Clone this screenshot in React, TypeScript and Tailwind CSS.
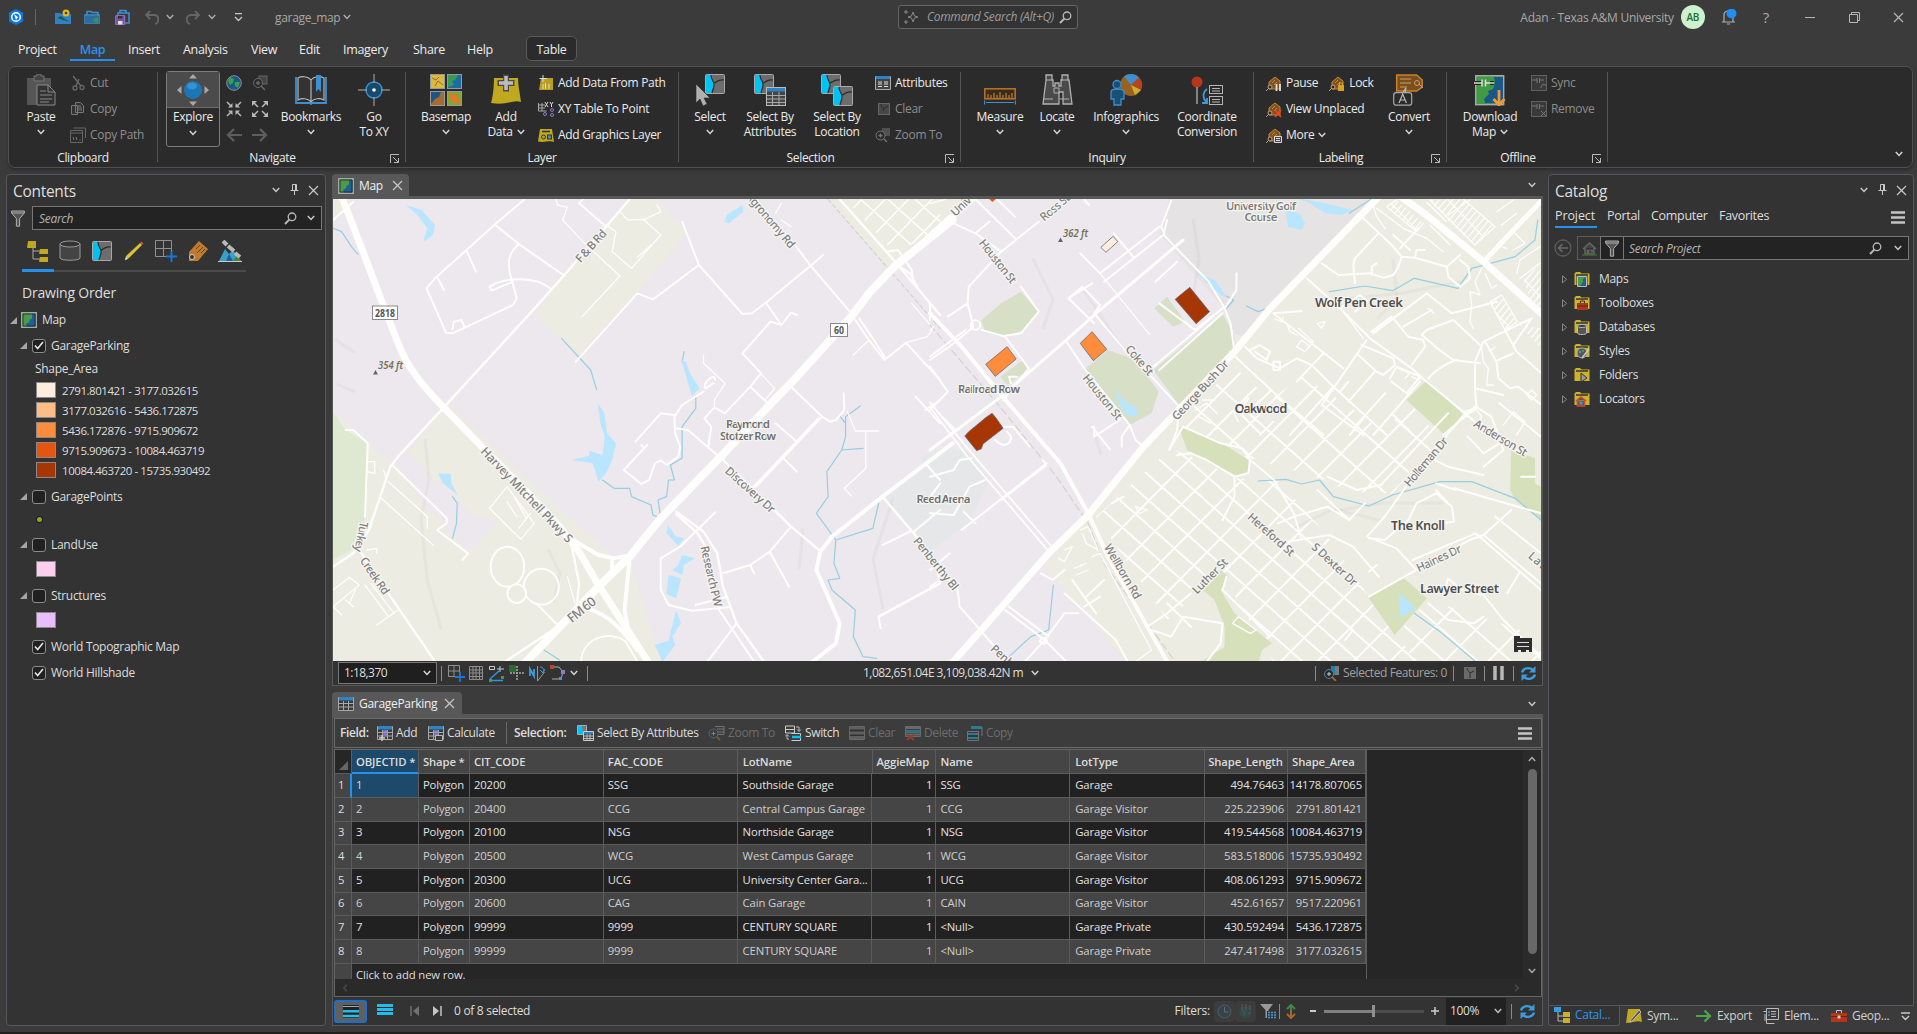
import React from "react";

/* ---------- small drawing helpers ---------- */
type IconProps = { w?: number; h?: number; vb?: string; className?: string; children?: React.ReactNode };
const I = ({ w = 16, h, vb, className = "", children }: IconProps) => (
  <svg width={w} height={h ?? w} viewBox={vb ?? `0 0 ${w} ${h ?? w}`} fill="none" className={"shrink-0 " + className}>
    {children}
  </svg>
);
const Chev = ({ c = "#d6d6d6", w = 8, className = "" }: { c?: string; w?: number; className?: string }) => (
  <I w={w} h={6} vb="0 0 8 6" className={className}><path d="M.8 1 4 4.4 7.2 1" stroke={c} strokeWidth="1.5" /></I>
);
const Close = ({ c = "#c8c8c8" }: { c?: string }) => <I w={11}><path d="M1 1l9 9M10 1 1 10" stroke={c} strokeWidth="1.2" /></I>;
const Pin = () => <I w={9} h={12}><path d="M2.5.5h4v6h-4zM.5 6.5h8M4.5 7v4M5.5 1v5" stroke="#c8c8c8" /></I>;
const Mag = ({ c = "#b9b9b9" }: { c?: string }) => <I w={13}><circle cx="8" cy="4.8" r="3.8" stroke={c} strokeWidth="1.3" /><path d="M5.3 7.6 1 12" stroke={c} strokeWidth="2" /></I>;
const Funnel = ({ w = 14 }: { w?: number }) => <I w={w} h={w + 3} vb="0 0 14 17"><path d="M.6 1h12.8v2L8.6 8.6v7.6H5.4V8.6L.6 3z" stroke="#b0b0b0" fill="#555" /><path d="M1 3h12" stroke="#b0b0b0" /></I>;
const Burger = () => <I w={14} h={13}><path d="M0 1.5h14M0 6.5h14M0 11.5h14" stroke="#c4c4c4" strokeWidth="2.6" /></I>;
const Refresh = () => (
  <I w={17}><path d="M2 7.5C3 3.5 9 1.500 13 5M15 9.500C14 13.500 8 15.500 4 12" stroke="#3c9bdc" strokeWidth="2.4" /><path d="M15.500 1v6.500H9zM1.500 16V9.500H8z" fill="#3c9bdc" /></I>
);
const Launcher = () => <I w={9} className="ml-[3px]"><path d="M.5 9V.5H9M3 3l5 5M8.500 4v4.500H4" stroke="#b9b9b9" /></I>;
const Sep = ({ className = "" }: { className?: string }) => <div className={"w-px shrink-0 bg-[#8a8a8a] " + className} />;

const MapMini = ({ w = 16 }: { w?: number }) => (
  <I w={w} vb="0 0 16 16"><path d="M.7.7h14.600v14.600H.7z" fill="#4c9a4c" stroke="#a8a8a8" strokeWidth="1.300" /><path d="M11 2h3.500v12.500H6l-1-3 3-1 1-3 2-1z" fill="#1d5f96" /><path d="M2 2h12v12H2z" stroke="#222" strokeWidth=".8" /></I>
);
const Table = ({ c = "#a8a8a8", head = "#2f83c5", dots = "", extra }: { c?: string; head?: string; dots?: string; extra?: React.ReactNode }) => (
  <I w={16}><path d="M.5 1.500h15v13H.5z" stroke={c} fill="#3a3a3a" /><path d="M1 1h14v3.500H1z" fill={head} /><path d="M1 7.500h14M1 11h14M5.500 5v9M10.500 5v9" stroke={c} />
    {dots && <path d="M6.200 6.300h4M6.200 9.300h4" stroke={dots} strokeWidth="2.200" />}{extra}</I>
);
const SelPoly = ({ x = 0, y = 0 }: { x?: number; y?: number }) => (
  <g transform={`translate(${x} ${y})`}><rect x=".5" y=".5" width="19" height="19" rx="1" fill="#6d6d6d" stroke="#a9a9a9" /><path d="M1 1h5c0 6 4 6 3 11l-2 7H1z" fill="#00c2f3" /><path d="M6 1c0 6 4 6 3 11l-2 7M9 9c3-1 4-4 10-3" stroke="#2b2b2b" strokeWidth="1.200" /></g>
);
const Tag = ({ extra }: { extra?: React.ReactNode }) => (
  <I w={17}><path d="M4 14V7l6-5 5 4v8z" fill="#7a5223" stroke="#d08532" /><path d="M7 8l3-3M9 10l3-3" stroke="#d08532" /><circle cx="5" cy="12" r="2" stroke="#c0a080" fill="#2b2b2b" /><path d="M1 16l3-3" stroke="#c0a080" />{extra}</I>
);
const Gray = ({ children }: { children: React.ReactNode }) => <I w={16}>{children}</I>;

/* ---------- ribbon ---------- */
const Big = ({ cls, icon, a, b, chev }: { cls: string; icon: React.ReactNode; a: string; b?: React.ReactNode; chev?: boolean }) => (
  <div className={"flex shrink-0 flex-col items-center whitespace-nowrap pt-[7px] " + cls}>
    <div className="mb-[3px] flex h-8 items-center">{icon}</div>
    <div className="h-[15px] leading-[15px]">{a}</div>
    <div className="flex h-[15px] items-center gap-1 leading-[15px]">{b}{chev && <Chev />}</div>
  </div>
);
const Small = ({ icon, t, dim, after }: { icon: React.ReactNode; t: string; dim?: boolean; after?: React.ReactNode }) => (
  <div className={"flex h-[26px] items-center gap-1 whitespace-nowrap " + (dim ? "text-[#8d8d8d]" : "")}>
    <div className="flex w-[17px] justify-center">{icon}</div><span>{t}</span>{after}
  </div>
);
const Group = ({ cls, label, launch, children }: { cls: string; label: string; launch?: boolean; children: React.ReactNode }) => (
  <>
    <div className={"flex shrink-0 flex-col " + cls}>
      <div className="flex h-[82px]">{children}</div>
      <div className={"grid h-[18px] items-center text-center leading-none " + (launch ? "grid-cols-[1fr_18px]" : "grid-cols-1")}>
        <span>{label}</span>{launch && <Launcher />}
      </div>
    </div>
    <div className="h-[90px] w-px shrink-0 self-center bg-[#555]" />
  </>
);

const Ribbon = () => (
  <div className="ml-2 mr-1 flex h-[102px] shrink-0 rounded-[7px] border border-[#505050] bg-[#2b2b2b] text-[#ececec] shadow-[0_2px_3px_rgba(0,0,0,.25)]">
    <Group cls="w-[148px]" label="Clipboard">
      <Big cls="ml-[9px] w-[46px]" a="Paste" chev icon={<I w={30} h={32}><rect x="1" y="4" width="24" height="27" fill="#555" /><path d="M8 2h3V0h4v2h3v5H8z" fill="#444" stroke="#777" /><path d="M11 11h11l7 7v13H11z" fill="#333" stroke="#8a8a8a" /><path d="M22 11v7h7M14 17h6M14 21h12M14 25h12M14 28h9" stroke="#8a8a8a" /></I>} />
      <div className="ml-[5px] flex flex-col pt-[3px]">
        <Small dim t="Cut" icon={<Gray><path d="M3 1l8 10M9 4 6 11" stroke="#666" strokeWidth="1.500" /><circle cx="12" cy="12.500" r="2" stroke="#666" strokeWidth="1.300" /><circle cx="5" cy="13" r="2" stroke="#666" strokeWidth="1.300" /></Gray>} />
        <Small dim t="Copy" icon={<Gray><path d="M1.500 4.500h6v9h-6zM5.500 1.500h5l3 3v7h-8z" stroke="#777" fill="#333" /><path d="M7 5h4M7 7h5M7 9h5" stroke="#777" /></Gray>} />
        <Small dim t="Copy Path" icon={<Gray><path d="M3.500 1h12v10M.5 3.500h12v12H.5zM.5 6h12" stroke="#666" /><path d="M3 10l1 3M6 10l1 3M9.500 13h1" stroke="#777" /></Gray>} />
      </div>
    </Group>
    <Group cls="w-[247px]" label="Navigate" launch>
      <div className="ml-2 mt-1 flex h-[76px] w-[54px] flex-col items-center rounded-[3px] border border-[#7d7d7d]">
        <div className="flex h-9 w-full items-center justify-center border-b border-[#6a6a6a] bg-[#4b4b4b]">
          <I w={32}><circle cx="16" cy="16" r="9" fill="#1b76b5" /><ellipse cx="15" cy="12" rx="5" ry="3.500" fill="#4aa3dc" opacity=".6" /><path d="M16 0l4 4.500h-8zM16 32l4-4.500h-8zM0 16l4.500-4v8zM32 16l-4.500-4v8z" fill="#a8a8a8" /></I>
        </div>
        <div className="mt-[2px] h-[14px] leading-[14px]">Explore</div><Chev className="mt-[6px]" />
      </div>
      <div className="ml-px mt-[3px] grid h-[78px] w-[52px] grid-cols-2 grid-rows-3 place-items-center">
        <I w={16}><circle cx="8" cy="8" r="7.300" fill="#165a86" stroke="#909090" /><path d="M4 2l4 2-1 4-3 2-2-4zM9 7l5 0-2 6-3-2z" fill="#3f9c4b" /></I>
        <I w={16}><rect x="7" y="1" width="8" height="8" fill="#444" stroke="#666" /><circle cx="6" cy="8" r="4.500" stroke="#6a6a6a" fill="#2b2b2b" /><path d="M4 8h4M6 6v4M9 11l4 4" stroke="#6a6a6a" strokeWidth="1.500" /></I>
        <I w={16}><path d="M1 1l4 4M15 1l-4 4M1 15l4-4M15 15l-4-4" stroke="#b8b8b8" strokeWidth="1.500" /><path d="M6.500 2v4.500H2zM9.500 2v4.500H14zM6.500 14V9.500H2zM9.500 14V9.500H14z" fill="#b8b8b8" /></I>
        <I w={16}><path d="M1 1l5 5M15 1l-5 5M1 15l5-5M15 15l-5-5" stroke="#b8b8b8" strokeWidth="1.500" /><path d="M0 0h5L0 5zM16 0v5l-5-5zM0 16v-5l5 5zM16 16h-5l5-5z" fill="#b8b8b8" /></I>
        <I w={16}><path d="M16 8H2M8 2 2 8l6 6" stroke="#5e5e5e" strokeWidth="2.200" /></I>
        <I w={16}><path d="M0 8h14M8 2l6 6-6 6" stroke="#5e5e5e" strokeWidth="2.200" /></I>
      </div>
      <Big cls="ml-[7px] w-[62px]" a="Bookmarks" chev icon={<I w={32} h={30}><path d="M2 3h-1v25h14l1 1 1-1h14V3h-1" stroke="#3d8fcf" strokeWidth="1.800" /><path d="M16 5C13 1 6 1 3 3v22c4-2 10-2 13 2 3-4 9-4 13-2V3c-4-2-10-2-13 2zM16 5v22" stroke="#b5b5b5" fill="#333" strokeWidth="1.200" /><path d="M21 0h5v17l-2.500-3-2.500 3z" fill="#3d8fcf" /></I>} />
      <Big cls="ml-[9px] w-[46px]" a="Go" b="To XY" icon={<I w={32}><circle cx="16" cy="16" r="8" fill="#164a6d" stroke="#3d8fcf" strokeWidth="1.400" /><path d="M16 0v9M16 23v9M0 16h9M23 16h9" stroke="#b0b0b0" /><circle cx="16" cy="16" r="1.800" fill="#fff" /></I>} />
    </Group>
    <Group cls="w-[272px]" label="Layer">
      <Big cls="ml-[10px] w-[60px]" a="Basemap" chev icon={<I w={32}>
        <rect x=".5" y=".5" width="14" height="14" fill="#d8b93d" stroke="#999" /><path d="M2 4l4 2 3-3M5 12l3-5 5 4" stroke="#a06a28" />
        <rect x="17.500" y=".5" width="14" height="14" fill="#1d6aa5" stroke="#999" /><path d="M18 1h10l-3 5-3 1 2 4-6 2z" fill="#3d9a55" />
        <rect x=".5" y="17.500" width="14" height="14" fill="#a56b2f" stroke="#999" /><path d="M1 18h10l-2 5-4 2-4 5z" fill="#1d5586" />
        <rect x="17.500" y="17.500" width="14" height="14" fill="#7fa63a" stroke="#999" /><path d="M20 18l3 3 4-1 1 5 3 2v2l-4-1-2 3-3-5-3-1z" fill="#e07a28" /></I>} />
      <Big cls="ml-[5px] w-[50px]" a="Add" b="Data" chev icon={<I w={32}><path d="M4 4h24c0 8 2 16 3 24-8-3-14 4-30 1C3 22 4 12 4 4z" fill="#c0a81f" /><path d="M16 .5v17M7.500 9h17" stroke="#4a4a4a" strokeWidth="6" /><path d="M16 2v14M9 9h14" stroke="#bdbdbd" strokeWidth="3.500" /></I>} />
      <div className="ml-[6px] flex flex-col pt-[3px]">
        <Small t="Add Data From Path" icon={<Gray><path d="M3 3h12v12H1z" fill="#b89f20" /><path d="M5 0v7M1.500 3.500H9M5 9v5M7.500 8v6M11 9v5" stroke="#ddd" /></Gray>} />
        <Small t="XY Table To Point" icon={<Gray><path d="M.5 2v8h8M1 4h6M1 7h6M4 2v8" stroke="#aaa" /><path d="M7 1l3 5M10 1 7 6M12 1l1.500 2.500L15 1M13.500 3v3" stroke="#ddd" /><circle cx="14" cy="9" r="1.500" stroke="#8c7bd0" /><circle cx="7" cy="13" r="1.500" stroke="#8c7bd0" /><circle cx="14" cy="14" r="1.500" stroke="#8c7bd0" /></Gray>} />
        <Small t="Add Graphics Layer" icon={<Gray><path d="M2 2h12l2 13c-5-2-9 1-16-.5z" fill="#c0a81f" /><path d="M4 4.500h8" stroke="#333" strokeWidth="1.500" /><circle cx="5.500" cy="10" r="2" stroke="#333" /><rect x="9.500" y="8" width="4" height="4" stroke="#333" fill="#4589b8" /></Gray>} />
      </div>
    </Group>
    <Group cls="w-[281px]" label="Selection" launch>
      <Big cls="ml-[6px] w-[50px]" a="Select" chev icon={<I w={32}><SelPoly x={11} y={0} /><path d="M2 10v19l4-4 3 7 4-2-3-6h6z" fill="#b0b0b0" stroke="#2b2b2b" strokeWidth=".6" /></I>} />
      <Big cls="w-[70px]" a="Select By" b="Attributes" icon={<I w={32}><SelPoly /><rect x="12.500" y="13.500" width="19" height="18" fill="#444" stroke="#bbb" /><path d="M13 14h18v3.500H13z" fill="#2f83c5" /><path d="M13 21.500h18M13 25h18M13 28.500h18M18.500 18v13M25 18v13" stroke="#a8a8a8" /></I>} />
      <Big cls="w-[64px]" a="Select By" b="Location" icon={<I w={32}><SelPoly /><SelPoly x={12} y={12} /></I>} />
      <div className="ml-[5px] flex flex-col pt-[3px]">
        <Small t="Attributes" icon={<Gray><path d="M.5 1.500h15v13H.5z" stroke="#aaa" fill="#444" /><path d="M1 1h14v3H1z" fill="#2f83c5" /><path d="M3 7h4M3 9h4M3 11.500h4M9 7h4M9 9h4M9 11.500h4" stroke="#ddd" /></Gray>} />
        <Small dim t="Clear" icon={<Gray><rect x="3.500" y="2.500" width="11" height="11" fill="#484848" stroke="#666" /><path d="M6 3c0 4 3 4 2.500 7M8 8l5-3" stroke="#2b2b2b" /></Gray>} />
        <Small dim t="Zoom To" icon={<Gray><rect x="7" y="1" width="8" height="8" fill="#505050" /><circle cx="5.500" cy="8.500" r="4.500" stroke="#777" fill="#2b2b2b" /><path d="M3.500 8.500h4M5.500 6.500v4M9 12l3 3" stroke="#777" strokeWidth="1.300" /></Gray>} />
      </div>
    </Group>
    <Group cls="w-[292px]" label="Inquiry">
      <Big cls="ml-[9px] w-[60px]" a="Measure" chev icon={<I w={32}><rect x=".8" y="14.800" width="30.400" height="10" fill="#3a2d1c" stroke="#b8732a" strokeWidth="1.500" /><path d="M4 24v-4M7 24v-3M10 24v-5M13 24v-3M16 24v-6M19 24v-3M22 24v-5M25 24v-3M28 24v-5" stroke="#d98c35" /><path d="M.5 26.500v4M31.500 26.500v4M2 28.500h28" stroke="#3d8fcf" strokeWidth="1.200" /></I>} />
      <Big cls="ml-px w-[52px]" a="Locate" chev icon={<I w={32}><path d="M5 1h6v5h1v6h2v-3h4v3h2V6h1V1h6v5h1l3 24h-9V18h-4v12H2L5 6z" fill="#4a4a4a" stroke="#b0b0b0" strokeWidth="1.300" /><path d="M5 6h7M20 6h7M3 25h9M19 25h9M13 14h5v5h-5z" stroke="#b0b0b0" /></I>} />
      <Big cls="ml-[3px] w-[80px]" a="Infographics" chev icon={<I w={34} h={32}><circle cx="22" cy="11" r="11" fill="#99621f" /><path d="M22 11 15 2.500A11 11 0 0 1 30 3.500z" fill="#3d8fcf" /><path d="M22 11l8-7.500A11 11 0 0 1 32 16z" fill="#b8421f" /><path d="M22 11l10 5-6 5z" fill="#c9b22b" /><circle cx="8" cy="10.500" r="4" fill="#1a4f74" stroke="#3d8fcf" strokeWidth="1.300" /><path d="M2 18c0-2 2-3 6-3s7 1 7 3v7h-3v6H5v-6H2z" fill="#1a4f74" stroke="#3d8fcf" strokeWidth="1.300" /></I>} />
      <Big cls="ml-[4px] w-[74px]" a="Coordinate" b="Conversion" icon={<I w={34} h={32}><circle cx="7" cy="8" r="5.500" fill="#b8371c" /><path d="M7 13v17" stroke="#aaa" strokeWidth="1.400" /><path d="M17 15c-4 3-5 8-1 13M17 24v5h-5" stroke="#3d9be0" strokeWidth="1.800" /><rect x="19.500" y="11.500" width="13" height="8" stroke="#b5b5b5" /><rect x="19.500" y="22.500" width="13" height="8" stroke="#b5b5b5" /><path d="M22 14.500h8M22 17h8M22 25.500h8M22 28h8" stroke="#b5b5b5" /></I>} />
    </Group>
    <Group cls="w-[192px]" label="Labeling" launch>
      <div className="ml-[11px] flex w-[100px] flex-col pt-[3px]">
        <div className="flex gap-[10px]">
          <Small t="Pause" icon={<Tag extra={<path d="M11.500 9v7M15 9v7" stroke="#ddd" strokeWidth="1.800" />} />} />
          <Small t="Lock" icon={<Tag extra={<><rect x="10" y="10" width="6" height="6" fill="#d8a22a" /><path d="M11.500 10V8h3v2" stroke="#d8a22a" /></>} />} />
        </div>
        <Small t="View Unplaced" icon={<Tag extra={<path d="M10 9l6 7M16 9l-6 7" stroke="#f0431c" strokeWidth="1.800" />} />} />
        <Small t="More" after={<Chev />} icon={<Tag extra={<path d="M9.500 9.500h7v6h-7zM11 11.500h4M11 13.500h4" stroke="#ddd" fill="#444" />} />} />
      </div>
      <Big cls="ml-[17px] w-[54px]" a="Convert" chev icon={<I w={32}><path d="M3.700 1h20l5.500 5v7l-5.500 4H3.700z" fill="#7a4f1c" stroke="#c8832e" strokeWidth="1.500" /><path d="M7 5h11M7 9h11M7 13h7" stroke="#c8a070" /><circle cx="24" cy="9" r="2.500" stroke="#c8a070" /><path d="M26 10l4 4" stroke="#aaa" /><rect x=".7" y="18.700" width="18" height="12.500" rx="2.500" fill="#2b2b2b" stroke="#a8a8a8" strokeWidth="1.200" /><path d="M6 29l3.700-9 3.700 9M7.500 26h4.500M10 18l3-4-1 5" stroke="#bbb" strokeWidth="1.200" /></I>} />
    </Group>
    <Group cls="w-[160px]" label="Offline" launch>
      <Big cls="ml-[12px] w-[62px]" a="Download" b="Map" chev icon={<I w={32}><rect x="1.700" y="1.700" width="28" height="29" fill="#439a45" stroke="#a9a9a9" strokeWidth="1.400" /><path d="M20 3h9v26H11l-1-4 5-5-1-3 5-2 2-6z" fill="#1a5688" /><path d="M1 9h7M16 9h4" stroke="#222" strokeWidth="4" /><path d="M0 9h8M8 5.500v7M11.500 5.500v7M12 9h8" stroke="#ddd" strokeWidth="1.500" /><path d="M25 16v14M19.500 25l5.500 6 5.500-6" stroke="#f09a36" strokeWidth="2.800" /></I>} />
      <div className="ml-[9px] flex flex-col pt-[3px]">
        <Small dim t="Sync" icon={<Gray><rect x=".5" y=".5" width="15" height="15" fill="#3a3a3a" stroke="#606060" /><path d="M1 5h5M6 3v5M8.500 3v5M9 5h4M10 13c0-4 4-5 5-2" stroke="#777" /></Gray>} />
        <Small dim t="Remove" icon={<Gray><rect x=".5" y=".5" width="15" height="15" fill="#3a3a3a" stroke="#606060" /><path d="M1 5h5M6 3v5M8.500 3v5M9 5h4M10 10l5 5M15 10l-5 5" stroke="#777" /></Gray>} />
      </div>
    </Group>
    <div className="ml-auto mr-[9px] mt-[84px]"><Chev /></div>
  </div>
);

/* ---------- map canvas ---------- */
const V = ({ d, w = 2, c = "#fefefc", f = "none", dash }: { d: string; w?: number; c?: string; f?: string; dash?: string }) => (
  <path d={d} stroke={c} strokeWidth={w} fill={f} strokeDasharray={dash} vectorEffect="non-scaling-stroke" strokeLinejoin="round" strokeLinecap="round" />
);
const F = ({ p, c }: { p: string; c: string }) => <polygon points={p} fill={c} />;
type LabelT = [string, number, number, number, number, number?];
const RoadLabels = ({ items, ox, sx }: { items: LabelT[]; ox: number; sx: number }) => (
  <>
    {items.map(([t, x1, y1, x2, y2, size = 11.5], i) => {
      const ax = ox + x1 / sx, ay = y1 / 3 - 29, bx = ox + x2 / sx, by = y2 / 3 - 29;
      const len = Math.hypot(bx - ax, by - ay);
      const a = (Math.atan2(by - ay, bx - ax) * 180) / Math.PI;
      return (
        <text key={i} transform={`translate(${ax} ${ay}) rotate(${a})`} y="4" textLength={len} fontSize={size} fill="#7f7f7f" fontWeight="500" stroke="#f6f5f2" strokeWidth="2.500" paintOrder="stroke">{t}</text>
      );
    })}
  </>
);
const gridLines = (x0: number, x1: number, stepA: number, stepB: number, off = 0) => {
  let d = "";
  for (let x = x0 - 1700; x < x1 + 200; x += stepA) d += `M${x + off} 0L${x + off + 1430} 1500`;
  for (let x = x0; x < x1 + 1700; x += stepB) d += `M${x} 0L${x - 1250} 1500`;
  return d;
};
const leftLabels: LabelT[] = [
  ["Harvey Mitchell Pkwy S", 393, 838, 618, 1112, 12], ["F & B Rd", 636, 272, 705, 184], ["Agronomy Rd", 1075, 72, 1190, 230], ["Discovery Dr", 1020, 897, 1140, 1022],
  ["Turkey", 88, 1056, 72, 1145], ["Creek Rd", 84, 1165, 146, 1270], ["FM 60", 615, 1350, 680, 1290, 13], ["Research PW", 962, 1128, 998, 1310],
];
const rightLabels: LabelT[] = [
  ["Univ", 57, 132, 100, 84], ["Ross St", 282, 146, 350, 78], ["Houston St", 130, 212, 213, 336], ["Coke St", 500, 530, 560, 612], ["Houston St", 392, 617, 480, 745],
  ["George Bush Dr", 617, 745, 750, 575], ["Anderson St", 1378, 758, 1508, 850], ["Holleman Dr", 1205, 945, 1304, 806], ["Hereford St", 808, 1035, 918, 1152],
  ["S Dexter Dr", 970, 1125, 1076, 1242], ["Haines Dr", 1232, 1196, 1342, 1134], ["Luther St", 668, 1266, 748, 1170], ["Wellborn Rd", 448, 1125, 527, 1284],
  ["Penberthy Bl", -36, 1106, 66, 1256], ["Penberthy", 158, 1430, 260, 1540], ["Lawyer", 1518, 1152, 1600, 1240],
];
const Place = ({ x, y, s = 14, c = "#4f4f4f", w, children }: { x: number; y: number; s?: number; c?: string; w?: number; children: string }) => (
  <text x={x} y={y} fontSize={s} fill={c} fontWeight={600} textAnchor="middle" textLength={w} stroke="#f4f3ef" strokeWidth="2.500" paintOrder="stroke">{children}</text>
);
const MapCanvas = () => (
  <svg width="1208" height="462" viewBox="0 0 1208 462" fill="none" className="block tracking-normal" fontFamily="'Noto Sans', sans-serif">
    <defs>
      <clipPath id="gA"><polygon points="420,1040 610,835 700,880 770,925 880,930 1000,1090 1110,1280 1175,1395 1240,1480 870,1480 735,1205 600,1350" /></clipPath>
      <clipPath id="gB"><polygon points="640,740 770,590 860,690 940,620 1050,700 1150,790 1210,690 1290,810 1170,970 1060,965 1000,930 800,860 640,770" /></clipPath>
      <clipPath id="gC"><polygon points="600,15 700,12 795,95 735,150 650,75" /><polygon points="500,14 540,50 580,85 560,110 470,35" /><polygon points="780,320 815,300 862,380 825,405" /><polygon points="880,250 932,210 932,345 905,330" /><polygon points="870,390 932,400 932,460" /></clipPath>
      <clipPath id="gD"><polygon points="1180,1395 1260,1290 1545,1400 1545,1480 1230,1480" /></clipPath>
      <clipPath id="gE"><polygon points="1325,88 1568,88 1568,180 1450,250" /></clipPath>
    </defs>
    <rect width="1208" height="462" fill="#ecece3" />
    <g transform="translate(-3 -29) scale(.38911 .33333)">
      <F c="#ece8ed" p="8,88 1280,88 1430,290 1640,130 1640,1480 850,1480 770,1165 725,1160 300,700 200,850 375,1040 435,1050 355,1150 250,1010 150,870 8,720" />
      <F c="#ecece3" p="770,88 840,88 915,190 790,370 635,555 525,435 600,315" />
      <F c="#ecece3" p="8,88 70,88 8,160" />
      <F c="#dfe9d2" p="8,725 40,780 95,820 88,1080 55,1140 8,1170" />
      <F c="#e5e7e9" p="1640,840 1568,850 1500,900 1420,985 1500,1085 1640,1180" />
    </g>
    <g transform="translate(597 -29) scale(.39541 .33333)">
      <F c="#ece8ed" p="0,200 110,88 620,88 780,500 400,1040 290,1190 500,1480 0,1480" />
      <F c="#e5e3e3" p="605,88 1130,88 860,410 790,500 770,490 740,410 580,190" />
      <F c="#e5e7e9" p="-20,860 40,830 100,850 150,930 100,1055 -20,1160" />
      <g clipPath="url(#gA)"><V w={2} d={gridLines(0, 1600, 72, 92, 12)} /></g>
      <g clipPath="url(#gB)"><V w={2} d={gridLines(0, 1600, 118, 76, 40)} /></g>
      <g clipPath="url(#gD)"><V w={2} d={gridLines(0, 1600, 84, 110)} /></g>
      <F c="#d7dfc6" p="230,365 275,425 240,480 190,498 140,488 130,450 180,400" />
      <F c="#d7dfc6" p="235,570 248,600 195,645 178,620" />
      <F c="#d7dfc6" p="600,380 645,455 615,470 567,415" />
      <F c="#d7dfc6" p="740,430 770,500 765,560 630,705 565,600" />
      <F c="#d7dfc6" p="450,540 520,570 578,665 560,730 505,765 390,600" />
      <F c="#d6e1bc" p="1255,632 1350,735 1305,798 1205,690" />
      <F c="#d6e1bc" p="630,770 740,820 805,870 805,905 775,917 700,870 650,840" />
      <F c="#d6e1bc" p="1470,838 1530,865 1530,940 1545,950 1545,1050 1480,990 1467,960" />
      <F c="#d6e1bc" p="1195,1222 1257,1285 1175,1395 1107,1280" />
      <F c="#d6e1bc" p="735,1200 755,1220 735,1260 770,1330 865,1420 840,1440 830,1480 680,1480 745,1430 745,1370 720,1290 690,1260" />
    </g>
    {/* soft relief */}
    <g stroke="#8a8f7c" strokeOpacity=".07" strokeWidth="3" fill="none">
      <path d="M92 240l4 40-8 40 6 60 14 50M2 140l20 14M4 185l18 8M215 350l12 24-6 30M560 300l-20 60 10 50M860 20l6 40-8 50M1060 60l4 40-20 20M760 230l8 26M960 330l40-20 50 12" />
      <path d="M1010 100l60-6 60-12M1000 312l50-8 60 0M470 330l-4 40M700 60l20 40-10 30M750 90l40 60" />
    </g>
    {/* streams and ponds */}
    <g transform="translate(-3 -29) scale(.38911 .33333)">
      <V c="#95cfe0" w={1.2} d="M8 175L30 185 55 230 72 253M595 505L670 600 685 658M700 930L730 955H770L775 980 825 1005 830 1035 850 1045 843 990 865 980 870 930H885L875 885 905 865V770L940 715V680M910 545L905 575M315 980L327 1000 325 1060 315 1105M1363 708L1325 740V800L1315 840 1277 905 1280 980 1250 1030 1300 1110 1395 1075 1410 1000M1310 738L1325 760M1315 840L1370 835M1300 1110L1295 1180 1310 1225 1280 1230 1290 1260 1350 1320 1345 1400 1370 1460 1405 1465M550 1440L590 1470" />
      {["195,105 235,120 270,165 265,195 240,215 250,175 225,135", "1060,105 1062,125 1025,160 1014,155 1020,135", "903,570 915,575 925,610 950,655 930,678", "688,700 705,730 712,790 735,820 725,870 712,905 690,935 675,880 620,870 665,858 668,842 700,855 706,800 695,760", "278,910 310,912 312,940 328,975 290,940", "868,1065 890,1100 910,1105 895,1127 865,1090", "905,1155 937,1165 910,1185 905,1215 880,1200 895,1185", "870,1215 902,1225 890,1285 865,1272", "890,1320 902,1360 880,1400 887,1425 855,1475 835,1425 870,1412"].map((p) => <F key={p} p={p} c="#b9e6fe" />)}
    </g>
    <g transform="translate(597 -29) scale(.39541 .33333)">
      <V c="#95cfe0" w={1.2} d="M1115 88L1060 130M750 415L768 390 750 378M800 408L830 425 860 412M1010 365L1100 348 1170 362 1225 325 1335 355 1370 295 1480 260 1530 210 1537 150M830 933L900 928 940 942 985 930 1020 980 1110 1008 1170 975 1290 935 1370 935 1480 985 1545 1050M312 1245L300 1380 255 1400 200 1460M1225 1330L1290 1385 1380 1475" />
      {["930,85 1000,100 1040,112 1070,120 1040,135 1000,130 960,100", "900,120 935,130 948,160 940,180 905,170", "675,310 720,330 752,383 735,375", "468,660 490,690 528,720 520,740 495,735 475,690", "1185,1268 1230,1315 1190,1342"].map((p) => <F key={p} p={p} c="#b9e6fe" />)}
    </g>
    {/* local streets, west */}
    <g transform="translate(-3 -29) scale(.38911 .33333)">
      <V c="#d3d3ce" w={1.2} dash="4 3" d="M1280 88L1568 475" />
      <g clipPath="url(#gE)"><V w={1.5} d={gridLines(600, 1400, 70, 60)} /></g>
      <V w={1.3} d="M580 88L585 105 610 112 598 150 650 215 745 318 648 440M745 125L765 150 805 148 850 195 775 295 725 245 735 185 710 165M840 105L850 125 805 150M790 262L825 225M1108 612L1143 655 1118 690M960 557L960 580 1015 640 988 690V712M1330 725L1350 783H1410M1377 783V895L1322 955 1340 978M1480 518L1535 500 1550 475 1495 400M1385 510L1345 555M410 1015L455 950 525 1060 490 1108 410 1015M455 995L480 1040M475 985L505 1045M485 1075L515 1030M150 935L250 1040V1075M132 985L265 1125M95 875H115V910L95 905M145 930L138 900M8 1260L50 1222 75 1245 8 1310 30 1335M90 1245L150 1340 175 1320M105 1240L165 1330M120 1365L175 1320M40 1290L60 1310M65 1260L50 1300M95 1140L120 1135V1150M610 1220L630 1300M1145 130L1160 100M1160 150L1185 170" />
      <V w={2} d="M8 150L60 95M425 162L500 88M425 162L270 325 248 355 298 488 315 490 470 405 480 385 462 310C455 260 465 245 485 222L425 165M485 222L600 315M350 240L375 305M275 320L293 360M410 350L415 362 470 335M410 350C450 320 530 320 565 355M315 478L318 455 338 450 345 470M640 100L710 170 690 200M640 100L650 88M905 155L948 285 1060 432 1085 430 1120 398 1235 287 1267 255M948 285L830 388 790 370 632 575M1195 225L1235 287 1340 430M1120 398L1160 465 1132 455 1060 550 1108 610 1080 650 1130 705M1160 465L1185 428 1200 435M1080 650L1015 730 988 712 962 745 980 770 972 830M990 630C990 605 955 640 965 655L985 640M960 665L905 705 885 740 887 790 900 830 895 860 865 885 850 870 835 880 820 930 800 942 755 900 815 825M800 825L808 835M885 735L850 730 785 815M890 775L920 780 970 830 1010 870M1265 740L1095 950M1255 745L1085 955M1145 760L1200 815M1165 865L1200 905M1185 650L1265 740 1285 755 1300 750 1322 720 1320 670M1185 1070L1130 1145 1080 1185 1010 1210M1130 1145L1180 1250M1080 1185L1090 1210M1350 450L1385 510 1425 570 1480 518 1568 630M1360 445L1395 505 1425 560M1505 680L1568 760M1530 720L1568 690M1410 1340L1415 1375M1500 1085L1568 1020M1420 1125L1490 1085M1530 880L1568 930M1530 1000L1568 940M990 1027L900 1130 850 1165V1260L870 1305 930 1322 1025 1312M940 1305L1020 1280M1045 1360L970 1475M1000 1320L1090 1475M160 885L300 1045 300 1060 275 1080 355 1150 340 1170M40 780H60L97 820 90 1040M645 1475C650 1400 720 1380 760 1415L790 1475M530 1300L585 1365M1430 245L1460 240 1495 300 1500 340M1465 290L1490 310 1510 350" />
      <g stroke="#fefefc" strokeWidth="2"><ellipse cx="456" cy="1190" rx="43" ry="60" vectorEffect="non-scaling-stroke" /><ellipse cx="543" cy="1250" rx="45" ry="54" vectorEffect="non-scaling-stroke" /><ellipse cx="480" cy="1271" rx="24" ry="28" fill="#ecece3" vectorEffect="non-scaling-stroke" /></g>
      <V w={2.4} d="M175 860L290 715 530 410 600 318 770 88M175 860L155 890 100 1080 60 1150 8 1190M75 1140L150 1270 270 1475M1010 870L1185 1070 1262 1145M890 1025L960 1085 995 1150 1010 1250 1045 1360 1115 1475M890 1032L945 1090 975 1150M1310 88L1430 245 1568 435M1420 980L1500 1090 1555 1170 1568 1240 1410 1340M620 1120L640 1240 635 1300M450 1475L585 1370" />
      <V w={4} d="M1600 820L1420 980 1290 1100 1260 1145 1250 1200 1310 1360 1300 1420 1235 1480M625 1110L690 1155 730 1165 780 1155M725 1175V1215M770 1165L757 1320 770 1400M640 1310C700 1320 740 1360 790 1440" />
      <V w={7} d="M30 80L75 215 130 385 175 520C200 600 250 660 290 710L390 830 500 960 590 1070 640 1145 690 1245 820 1480" />
      <V w={8} d="M1600 150L1450 290 1385 370 1340 440 1200 620 1130 705 1000 865 850 1045 770 1160 690 1250 500 1480" />
    </g>
    {/* local streets, north-east */}
    <g transform="translate(897 -4) scale(.33333)">
      <g clipPath="url(#gC)"><V w={1.2} d={gridLines(0, 900, 90, 20)} /></g>
      <V w={1.3} d="M600 15L735 150 795 95M590 22L650 80M700 12L795 95M655 60L720 15M500 14L470 35 560 110 580 85M590 130L640 170M600 90L660 150M430 35L440 65 465 100M440 40L520 100 590 130M262 385L285 380 275 400 262 385M325 330L400 430M172 390L180 410 200 420M205 400L250 440 225 470 200 455 215 435 240 455M135 372L155 380 160 365M595 340L612 355M505 520L540 535 525 550M545 545L565 555 575 545M830 160L800 150 845 105 885 145 850 165M815 90L860 55M800 50L850 15M870 195L930 155M860 235L870 195M870 250L930 205M755 220L735 260 750 300 720 290 725 330 720 380 730 400M765 235L785 280 800 270M780 320L825 405 862 380 815 300ZM755 460L760 500 775 520 770 570H790M795 455L785 465M820 690L850 650 885 680 860 720M890 600L905 585 920 600 905 615ZM700 650L735 640 755 665 740 690M25 680L10 650" />
      <V w={2} d="M395 65L485 150 515 185 505 215 490 240 460 248 420 235 325 240 275 205M445 115L375 190 370 210 375 265M440 205L425 215 425 240M490 120L540 165M515 185L555 188 650 215 690 180M565 100L510 160M555 185L560 165 585 165M650 215L655 245 690 275 720 250 715 215 690 195M230 250L330 340 420 430 545 520 590 560M330 340L390 300 415 320 375 350M410 435L310 580 275 630M130 355L190 350 215 348M130 355L340 520M0 470L150 610 245 690 280 720M45 455L80 490 150 520M60 465L90 450 120 470 110 495 75 470M150 500V525H130V500ZM150 520L200 490 245 510M280 475L200 560M250 515L310 575 470 720M490 370L430 415M485 365L425 410M490 370L535 425 580 435 585 455 545 510M490 370L590 295 665 355 800 320M520 395L605 345M575 420L590 405 670 375 750 450M575 420L635 470 670 495 750 505M385 480L440 530 460 540 495 510 490 490 395 450M480 550L500 515 570 545 530 595 485 560M435 530L355 620M355 560L330 590M595 550C620 520 660 500 680 495M590 560L700 650 745 690M570 560L430 720M485 655L550 720M465 595L370 700M360 720L400 670M130 680L90 720M55 610L25 650 90 715M125 585L55 650M905 370L760 440 735 500 735 580 740 640 710 660 640 720M765 440L800 500 805 550 840 580 865 575 935 630M735 580L820 600M825 405L860 470 935 535M805 495L850 475M850 450L905 370M275 630L400 720M310 575L180 720" />
    </g>
    {/* local streets, east */}
    <g transform="translate(597 -29) scale(.39541 .33333)">
      <V c="#d3d3cd" w={1.2} dash="7 4" d="M0 465L170 700 320 920 400 1060 440 1180 620 1475" />
      <V w={1.3} d="M430 310L555 493M670 720L700 700 725 730M680 740L710 760M690 690L720 690M380 1080L400 1070 425 1140 395 1120 385 1090M410 1160L430 1150 560 1440 520 1475M365 1195L395 1180M370 1215L400 1200M340 1140L360 1130 340 1175 325 1165M765 1360L780 1340 825 1380 810 1390 765 1360M520 1010L550 1020 530 1030ZM0 100L40 88M0 480L10 470" />
      <V w={2} d="M50 155L115 190 180 245M115 190L150 155M115 88L215 205M170 88L215 140M0 570L60 520 110 470 95 400 98 350 180 245 275 155M0 560L90 480M0 400L0 450M45 440L95 400M380 250L430 310M430 310L580 170M440 335L590 195M465 190L515 262M410 340L350 385 415 460M385 350L430 405 415 430 500 550 560 620 630 710M350 385L385 350M610 92L585 170 595 200 705 335 745 415 760 460 768 530M600 150L592 185M625 275L570 335M775 310V360L745 415M390 88L402 105M580 400L670 480 740 415 565 590M645 455L670 480M740 430L580 600M345 515L390 595 505 765 520 810 540 830M480 750L415 800M410 770L455 838M415 770V800M505 765L485 800V830M230 350L275 425 230 490 185 498 130 480M190 500L250 595M185 690L250 595M205 640L200 620 220 620M630 710L625 780 605 840M185 770H210L252 830M165 810C180 830 205 830 205 800L195 785M0 920L60 900 75 870 105 865M295 880L80 1080M285 870L295 885 180 990M0 1030L60 1035 100 950 140 930M85 1025L115 1060M0 590L45 665 0 720M65 780L30 740M190 1320L290 1410 345 1475M200 1310L300 1400M240 1475L290 1410 340 1330H375M70 1260L75 1310 160 1425M-10 1145L70 1260M0 1200L50 1150M0 1250L20 1235M280 1210L310 1230 340 1200M340 1270L470 1410 500 1475M360 1230L420 1330M395 1280L440 1230M390 1310L430 1280M460 1000L490 980M1350 735L1380 710 1420 740 1450 840 1400 890M1350 735L1240 890 1150 1040 1105 1100M1305 800L1260 860 1310 890 1400 915M1110 1105L1150 1110 1210 1050 1230 1000 1280 970 1320 1010 1325 1055 1210 1070M1105 1100L1180 1135 1230 1200M1110 1280L1365 1110 1400 1095 1470 1020M1325 955L1545 1030M1220 1170L1380 1090 1545 1260M1400 1095L1545 1240M1430 1040L1545 1150M1280 940L1330 960M770 920L770 980 740 1050M880 1060L920 1040 1005 1010 1060 1050M920 1030L940 1110M905 1115L1010 1095 1070 1130 1135 1220M980 960L1060 1050 1100 1000M1005 920L1080 960 1140 945 1310 730M800 860L870 930 920 1030M625 855L660 850 700 870 770 920M640 770L735 820 790 835 810 870 805 910 770 920M640 770L605 840M1130 1185L1110 1205M1260 1300L1310 1350 1375 1360 1400 1340M1300 1275L1310 1225 1345 1260 1400 1275 1450 1350 1545 1460M1460 1270L1490 1210M1360 800L1400 850 1440 820M1310 1000L1280 960M1495 920H1530M1545 800L1440 700M750 1220L740 1260 860 1400M560 1380L610 1400 640 1340 740 1360 735 1420 700 1475M600 1300L660 1370M550 1370L600 1330 660 1270M1030 1340L1070 1380 1050 1410" />
      <ellipse cx="115" cy="465" rx="12" ry="14" stroke="#fefefc" strokeWidth="2" vectorEffect="non-scaling-stroke" /><ellipse cx="287" cy="1413" rx="9" ry="8" stroke="#fefefc" strokeWidth="2" vectorEffect="non-scaling-stroke" />
      <V w={1.8} d="M0 712L92 856 303 1148M0 697L104 848 315 1140" />
      <V w={3} d="M0 840L180 680 340 515 430 420 570 280 640 210" />
      <V w={4} d="M0 430L80 530 180 675 330 880 400 1030 450 1160 600 1475" />
      <V w={5} d="M1548 90L1400 275" />
      <V w={7} d="M1190 80L1250 130 1400 275 1550 435M1135 80L860 415 770 545 540 830 400 1035 300 1150 130 1380 55 1480M-10 210L110 82" />
      <g stroke="#6b6b6b" strokeWidth=".8">
        <polygon points="620,388 657,352 707,425 673,461" fill="#a63603" vectorEffect="non-scaling-stroke" />
        <polygon points="380,520 410,485 447,538 413,572" fill="#fd8d3c" vectorEffect="non-scaling-stroke" />
        <polygon points="141,583 195,530 218,567 165,619" fill="#fd8d3c" vectorEffect="non-scaling-stroke" />
        <polygon points="88,798 98,785 142,742 157,730 167,744 185,775 134,822 130,836 118,842" fill="#a63603" vectorEffect="non-scaling-stroke" />
        <polygon points="432,232 463,199 475,215 445,247" fill="#feedde" vectorEffect="non-scaling-stroke" />
        <polygon points="149,86 167,86 158,96" fill="#e6550d" stroke="none" />
      </g>
    </g>
    <RoadLabels items={leftLabels} ox={-3} sx={2.57} />
    <RoadLabels items={rightLabels} ox={597} sx={2.529} />
    <Place x={415} y={229} s={11.5} c="#6f6f6f" w={44}>Raymond</Place>
    <Place x={415} y={240.500} s={11.5} c="#6f6f6f" w={56}>Stotzer Row</Place>
    <Place x={610.500} y={304} s={11.500} c="#6f6f6f" w={54}>Reed Arena</Place>
    <Place x={656} y={194} s={11.500} c="#6f6f6f" w={62}>Railroad Row</Place>
    <Place x={928} y={10.500} s={11.500} c="#7b7b7b" w={70}>University Golf</Place>
    <Place x={928} y={22} s={11.500} c="#7b7b7b" w={33}>Course</Place>
    <Place x={1026} y={108} s={13} w={88}>Wolf Pen Creek</Place>
    <Place x={928} y={214} s={13} w={53}>Oakwood</Place>
    <Place x={1085} y={331} s={13} w={54}>The Knoll</Place>
    <Place x={1126.500} y={394} s={13} w={79}>Lawyer Street</Place>
    <Place x={979} y={473} s={13} w={60}>McCulloch</Place>
    <g fontSize="11" fontStyle="italic" fontWeight="600" fill="#77705a"><text x="45" y="170" textLength="25" lengthAdjust="spacingAndGlyphs">354 ft</text><text x="730" y="38" textLength="25" lengthAdjust="spacingAndGlyphs">362 ft</text></g>
    <path d="M42.500 171l2.500 4.500h-5zM727.500 38.500l2.500 4.500h-5z" fill="#666" />
    <g fontSize="10.500" fontWeight="700" fill="#555" textAnchor="middle"><rect x="39.500" y="107" width="25" height="13.500" fill="#fff" stroke="#8a8a8a" /><text x="52" y="117.700" textLength="20" lengthAdjust="spacingAndGlyphs">2818</text><rect x="497.500" y="124.500" width="17" height="13" fill="#fff" stroke="#8a8a8a" /><text x="506" y="135" textLength="10" lengthAdjust="spacingAndGlyphs">60</text></g>
    <path d="M1181 437h6v2h12v14h-3v-2h-3v2h-5v-2h-3v2h-4z" fill="#2f2f2f" /><path d="M1184 443.500h12M1184 447.500h12" stroke="#ddd" />
  </svg>
);

/* ---------- contents pane ---------- */
const Check = ({ on }: { on?: boolean }) => (
  <div className="flex size-[14px] shrink-0 items-center justify-center rounded-[3px] border border-[#8c8c8c] bg-[#202020]">
    {on && <I w={10} h={9}><path d="M1 4.500 3.700 7.500 9 1" stroke="#e6e6e6" strokeWidth="1.600" /></I>}
  </div>
);
const Tri = () => <I w={7}><path d="M7 0v7H0z" fill="#a6a6a6" /></I>;
const LayerRow = ({ t, on, tri, cls = "" }: { t: string; on?: boolean; tri?: boolean; cls?: string }) => (
  <div className={"flex h-[25px] shrink-0 items-center pl-[13px] " + cls}>
    <div className="mr-[5px] w-[7px]">{tri && <Tri />}</div><Check on={on} /><span className="ml-[5px]">{t}</span>
  </div>
);
const Swatch = ({ cls }: { cls: string }) => <div className={"h-4 w-5 shrink-0 border border-[#8a8a8a] " + cls} />;
const legend: [string, string][] = [
  ["bg-[#feedde]", "2791.801421 - 3177.032615"], ["bg-[#fdbe85]", "3177.032616 - 5436.172875"], ["bg-[#fd8d3c]", "5436.172876 - 9715.909672"],
  ["bg-[#e6550d]", "9715.909673 - 10084.463719"], ["bg-[#a63603]", "10084.463720 - 15735.930492"],
];
const PaneHead = ({ t, cls }: { t: string; cls: string }) => (
  <div className={"flex h-[30px] shrink-0 items-center " + cls}>
    <span className="pt-px text-[15.5px] tracking-[-0.3px]">{t}</span><Chev className="ml-auto mr-[10px]" c="#c8c8c8" /><Pin /><div className="ml-[9px]"><Close /></div>
  </div>
);
const Contents = () => (
  <div className="ml-[6px] flex h-[852px] w-[320px] shrink-0 flex-col rounded-[4px] border border-[#56565c] bg-[#333]">
    <PaneHead t="Contents" cls="pl-[6px] pr-[6px]" />
    <div className="mt-px flex h-6 items-center pl-1 pr-[3px]">
      <Funnel />
      <div className="ml-[7px] flex h-6 flex-1 items-center border border-[#777] bg-[#232323] px-[6px] italic text-[#b4b4b4]"><span className="pt-px">Search</span><span className="ml-auto"><Mag /></span><Chev className="ml-[10px] mr-0" c="#c8c8c8" /></div>
    </div>
    <div className="mt-[6px] grid h-[30px] w-[224px] grid-cols-7 place-items-center self-start pl-0 ml-[15px]">
      <I w={22}><path d="M6 6v13h8M6 11h8" stroke="#aaa" /><path d="M1 1h8v7H0zM13 9h8v5h-9zM13 17h8v5h-9z" fill="#c0a81f" /></I>
      <I w={22}><path d="M1 4v14c0 3 20 3 20 0V4" stroke="#9a9a9a" fill="#444" /><ellipse cx="11" cy="4" rx="10" ry="3" stroke="#9a9a9a" fill="#333" /></I>
      <I w={20}><SelPoly /></I>
      <I w={20}><path d="M1 19l1-4L16 2l2 2L5 17z" fill="#d9c43a" stroke="#7a6a20" strokeWidth=".5" /><path d="M16 2l1.500-1.500 2 2L18 4z" fill="#d9583a" /><path d="M1 19l1-3 2 2z" fill="#ddd" /></I>
      <I w={23}><path d="M.5.5h16v16H.5zM8.500 0v17M0 8.500h17" stroke="#909090" /><path d="M16.500 11v11M11 16.500h11" stroke="#1976d2" strokeWidth="2" /></I>
      <I w={22}><path d="M2 12 12 1l9 8-10 12H2z" fill="#c07c2e" /><path d="M9 9l4-4M10 13l6-6M14 13l4-4" stroke="#6d4413" /><circle cx="5" cy="17" r="2.500" stroke="#ccc" fill="#333" /></I>
      <I w={24} h={23}><path d="M1 21 7 9l4 5 4-4 8 11z" fill="#3aa0c8" /><path d="M8 21l3-7 4 7z" fill="#1d5f96" /><path d="M15 21l4-6 4 6z" fill="#3c8a44" /><path d="M0 21.500h24" stroke="#ccc" /><path d="M5 1l4 4M10 6l6 5M17 13l5 4" stroke="#b8b8b8" strokeWidth="4" /></I>
    </div>
    <div className="ml-[15px] mt-[3px] flex h-[3px] w-[224px] shrink-0 items-end bg-[#444] bg-[linear-gradient(#333_1px,#4a4a4a_1px)]"><div className="h-[3px] w-8 bg-[#2790ef]" /></div>
    <div className="mt-[11px] h-5 shrink-0 pl-[15px] text-[14px] font-medium leading-5 tracking-[-0.2px]">Drawing Order</div>
    <div className="mt-1 flex h-[26px] shrink-0 items-center pl-[3px]"><Tri /><span className="ml-1"><MapMini /></span><span className="ml-[5px]">Map</span></div>
    <LayerRow t="GarageParking" on tri />
    <div className="h-[22px] shrink-0 pl-7 leading-[22px]">Shape_Area</div>
    {legend.map(([c, t]) => <div key={t} className="flex h-5 shrink-0 items-center pl-[29px]"><Swatch cls={c} /><span className="ml-[6px] pt-px text-[11.5px] tracking-[-0.45px]">{t}</span></div>)}
    <LayerRow t="GaragePoints" tri cls="mt-1" />
    <div className="flex h-5 shrink-0 items-center pl-[30px]"><div className="size-[5px] rounded-full bg-[#8fa62a] shadow-[0_0_0_1px_#1c1c1c]" /></div>
    <LayerRow t="LandUse" tri cls="mt-[3px]" />
    <div className="mt-[2px] flex h-5 shrink-0 items-center pl-[29px]"><Swatch cls="bg-[#fccfef]" /></div>
    <LayerRow t="Structures" tri cls="mt-1" />
    <div className="mt-[2px] flex h-5 shrink-0 items-center pl-[29px]"><Swatch cls="bg-[#e8beff]" /></div>
    <LayerRow t="World Topographic Map" on cls="mt-1" />
    <LayerRow t="World Hillshade" on cls="mt-px" />
  </div>
);

/* ---------- attribute table ---------- */
const cols: { n: string; w: string; r?: boolean }[] = [
  { n: "OBJECTID *", w: "w-[67px] pl-[4px]" }, { n: "Shape *", w: "w-[51px] pl-[4px]" }, { n: "CIT_CODE", w: "w-[134px] pl-[4px]" }, { n: "FAC_CODE", w: "w-[134px] pl-[4px]" }, { n: "LotName", w: "w-[135px] pl-[5px]" },
  { n: "AggieMap", w: "w-[64px] pl-[4px]", r: true }, { n: "Name", w: "w-[134px] pl-[4px]" }, { n: "LotType", w: "w-[135px] pl-[5px]" }, { n: "Shape_Length", w: "w-[83px] pl-[3px]", r: true }, { n: "Shape_Area", w: "w-[78px] pl-[4px]", r: true },
];
const rows = [
  ["1", "Polygon", "20200", "SSG", "Southside Garage", "1", "SSG", "Garage", "494.76463", "14178.807065"],
  ["2", "Polygon", "20400", "CCG", "Central Campus Garage", "1", "CCG", "Garage Visitor", "225.223906", "2791.801421"],
  ["3", "Polygon", "20100", "NSG", "Northside Garage", "1", "NSG", "Garage Visitor", "419.544568", "10084.463719"],
  ["4", "Polygon", "20500", "WCG", "West Campus Garage", "1", "WCG", "Garage Visitor", "583.518006", "15735.930492"],
  ["5", "Polygon", "20300", "UCG", "University Center Gara...", "1", "UCG", "Garage Visitor", "408.061293", "9715.909672"],
  ["6", "Polygon", "20600", "CAG", "Cain Garage", "1", "CAIN", "Garage Visitor", "452.61657", "9517.220961"],
  ["7", "Polygon", "99999", "9999", "CENTURY SQUARE", "1", "<Null>", "Garage Private", "430.592494", "5436.172875"],
  ["8", "Polygon", "99999", "9999", "CENTURY SQUARE", "1", "<Null>", "Garage Private", "247.417498", "3177.032615"],
];
const rowH = ["h-6", "h-6", "h-[23px]", "h-6", "h-6", "h-[23px]", "h-6", "h-6"];
const Grid = () => (
  <div className="ml-px flex h-[248px] w-[1208px] shrink-0 flex-col border border-[#666] bg-[#262626] text-[11.3px] tracking-[-0.12px]">
    <div className="flex h-[229px]">
      <div className="h-[229px] w-[1032px] shrink-0 overflow-hidden border-r border-[#5c5c5c]">
        <div className="flex h-6 font-semibold">
          <div className="flex w-[17px] items-end justify-end border-b border-r border-[#5c5c5c] bg-[#262626] p-[3px]"><I w={9}><path d="M9 0v9H0z" fill="#666" /></I></div>
          {cols.map((c, i) => (
            <div key={c.n} className={"flex items-center whitespace-nowrap border-r text-[#dcdcdc] " + c.w + (i === 0 ? " border-b-2 border-b-[#2790ef] border-r-[#5c5c5c] bg-[#1d4a6b] pt-px" : " border-b border-[#5c5c5c] bg-[#454545]")}>{c.n}</div>
          ))}
        </div>
        {rows.map((r, ri) => (
          <div key={ri} className={"flex " + rowH[ri]}>
            <div className={"flex w-[17px] items-center border-b border-b-[#5c5c5c] bg-[#454545] pb-[2px] pl-[3px] " + (ri === 0 ? "border-r-2 border-r-[#2790ef]" : "border-r border-r-[#5c5c5c]")}>{ri + 1}</div>
            {r.map((v, i) => (
              <div key={i} className={"flex items-center whitespace-nowrap border-b border-r border-[#5c5c5c] pb-[2px] pr-[3px] " + cols[i].w + (cols[i].r ? " justify-end" : "") + (ri === 0 && i === 0 ? " bg-[#1d4a6b]" : ri % 2 ? " bg-[#454545] text-[#cfcfcf]" : " bg-[#212121] text-[#e2e2e2]")}>{v}</div>
            ))}
          </div>
        ))}
        <div className="flex h-[15px]"><div className="w-[17px] border-r border-[#5c5c5c] bg-[#454545]" /><div className="pl-1 leading-[21px]">Click to add new row.</div></div>
      </div>
      <div className="ml-auto flex w-[18px] flex-col items-center bg-[#2a2a2a] pt-[6px]"><Chev className="rotate-180" c="#aaa" /><div className="mt-[7px] h-[185px] w-[9px] rounded-full bg-[#686868]" /><Chev className="mt-[14px]" c="#aaa" /></div>
    </div>
    <div className="flex h-[17px] items-center justify-between bg-[#2a2a2a] pl-[6px] pr-[20px]"><Chev className="rotate-90" c="#4a4a4a" /><Chev className="-rotate-90" c="#4a4a4a" /></div>
  </div>
);

const TB = ({ icon, t, dim, cls }: { icon: React.ReactNode; t: string; dim?: boolean; cls: string }) => (
  <div className={"flex shrink-0 items-center gap-[3px] whitespace-nowrap " + cls + (dim ? " text-[#6d6d6d]" : "")}><div className={dim ? "opacity-60" : ""}>{icon}</div>{t}</div>
);
const RowsIcon = ({ a, b, c }: { a: string; b: string; c: string }) => <I w={16}><path d="M.5 1.500h15v13H.5z" fill="#2b2b2b" stroke="#888" /><path d="M1 3h14" stroke={a} strokeWidth="3" /><path d="M1 8h14" stroke={b} strokeWidth="3" /><path d="M1 12.500h14" stroke={c} strokeWidth="3" /></I>;
const Tab = ({ icon, t, cls }: { icon: React.ReactNode; t: string; cls: string }) => (
  <div className={"flex h-full items-center rounded-t-[4px] bg-[#585858] pl-[6px] pt-px " + cls}>{icon}<span className="ml-[5px] mr-auto pt-px text-[#f0f0f0]">{t}</span><Close /></div>
);
const Center = () => (
  <div className="ml-[6px] flex h-[852px] w-[1211px] shrink-0 flex-col">
    <div className="flex h-[22px] items-center"><Tab cls="w-[77px] pr-[6px]" t="Map" icon={<MapMini />} /><Chev className="ml-auto mr-[7px]" c="#c8c8c8" /></div>
    <div className="h-[3px] shrink-0 bg-[#585858]" />
    <div className="h-[462px] shrink-0 overflow-hidden border-l border-r-2 border-[#585858]"><MapCanvas /></div>
    <div className="flex h-[25px] shrink-0 items-center border-x border-b border-[#585858] bg-[#333] pl-[5px] pr-[5px]">
      <div className="flex h-[22px] w-[99px] items-center justify-between border border-[#777] bg-[#1f1f1f] px-[5px] tracking-[-0.55px]">1:18,370<Chev /></div>
      <Sep className="ml-1 h-[15px]" />
      <div className="ml-[6px] flex items-center gap-[4px]">
        <I w={17}><path d="M.5.500h11v11H.5zM6 0v12M0 6h12" stroke="#909090" /><path d="M12 7v10M7 12h10" stroke="#1976d2" strokeWidth="1.800" /></I>
        <I w={15}><path d="M.5.500h13v13H.5zM0 4h14M0 7h14M0 10.500h14M4 0v14M7 0v14M10.500 0v14" stroke="#909090" /></I>
        <I w={17}><path d="M1.500 1.500h5v3h-5zM12 1v6M9 4h7" stroke="#ccc" /><path d="M2 14l9-8M3 15.500h12" stroke="#2f95e0" strokeWidth="1.500" /><path d="M1 14h3v3H1zM13 11h3v3h-3z" fill="#3aa04a" /></I>
        <I w={16}><path d="M0 0h7v7H0z" fill="#2a6a32" /><path d="M8 1v14M1 8h15" stroke="#aaa" strokeDasharray="2 1" strokeWidth="1.500" /></I>
        <I w={17}><path d="M1 11V4l4 7V4" stroke="#3c9bdc" strokeWidth="1.800" /><path d="M8.500 1v15l7-9" stroke="#999" /><path d="M11 2c4 0 4 3 3 5M11 5l3 3 2-4" stroke="#3c9bdc" /></I>
        <I w={16}><path d="M2 2h7l4 5-2 7H2" stroke="#aaa" /><path d="M0 0h4v4H0z" fill="#c0432a" /><path d="M11 5h4v4h-4z" fill="#8c7bd0" /><path d="M9 12h3v3H9z" fill="#3c9bdc" /></I>
        <Chev />
      </div>
      <Sep className="ml-[9px] h-[15px]" />
      <span className="ml-[275px] w-[157px] whitespace-nowrap text-[12px] tracking-[-0.52px]">1,082,651.04E 3,109,038.42N m</span><Chev w={10} className="ml-[10px]" />
      <Sep className="ml-auto h-[15px]" />
      <div className="ml-1 flex h-5 w-[130px] shrink-0 items-center gap-1 whitespace-nowrap bg-[#2e2e2e] pl-[3px] tracking-[-0.4px] text-[#a0a0a0]"><I w={16}><rect x="8" y="1" width="8" height="9" fill="#7a7a7a" /><path d="M8 1h4v9H8z" fill="#1b84a8" /><circle cx="6" cy="9" r="4.500" stroke="#4b87b5" fill="#2b2b2b" /><path d="M4 9h4M6 7v4" stroke="#ccc" /><path d="M9 12l4 4" stroke="#a5682e" strokeWidth="1.800" /></I>Selected Features: 0</div>
      <Sep className="ml-[3px] h-[15px]" />
      <I w={12} className="ml-[10px]"><path d="M0 0h12v12H0z" fill="#6a6a6a" /><path d="M3 1c1 4 3 4 3 6v4M6 6l4-2" stroke="#2b2b2b" /></I>
      <Sep className="ml-[8px] h-[15px]" />
      <I w={12} h={14} className="ml-[8px]"><path d="M2 0v14M9 0v14" stroke="#b8b8b8" strokeWidth="3.500" /></I>
      <Sep className="ml-[8px] mr-[6px] h-[15px]" /><Refresh />
    </div>
    <div className="mt-[6px] flex h-[22px] shrink-0 items-center"><Tab cls="w-[130px] pr-[7px]" t="GarageParking" icon={<Table />} /><Chev className="ml-auto mr-[7px] mt-px" c="#c8c8c8" /></div>
    <div className="h-1 shrink-0 bg-[#585858]" />
    <div className="flex w-[1211px] flex-1 flex-col border-x border-b border-[#585858] bg-[#3c3c3c]">
      <div className="ml-px flex h-[30px] w-[1208px] shrink-0 items-center border border-[#6a6a6a] bg-[#3c3c3c] pl-[5px] tracking-[-0.35px]">
        <b className="w-[37px] font-semibold">Field:</b>
        <TB cls="w-[51px]" t="Add" icon={<Table dots="#8c7bd0" extra={<path d="M5 10v6M2 13h6" stroke="#ccc" strokeWidth="1.400" />} />} />
        <TB cls="w-[78px]" t="Calculate" icon={<Table dots="#8c7bd0" extra={<path d="M7.500 10.500h7v5h-7z" fill="#3a3a3a" stroke="#bbb" />} />} />
        <div className="h-[22px] w-px bg-[#666]" />
        <b className="ml-[7px] w-[63px] font-semibold">Selection:</b>
        <TB cls="w-[131px]" t="Select By Attributes" icon={<I w={17} h={16}><path d="M.5.500h9v9h-9z" fill="#777" stroke="#aaa" /><path d="M1 1h4l1 8H1z" fill="#00c2f3" /><path d="M6.500 6.500h10v9h-10z" fill="#444" stroke="#ccc" /><path d="M7 7h9v2H7z" fill="#2f83c5" /><path d="M7 11h9M7 13.500h9M10 9v6M13 9v6" stroke="#bbb" /></I>} />
        <TB dim cls="w-[77px]" t="Zoom To" icon={<I w={17} h={16}><path d="M7 1.500h9v8H9M9 4h7M9 7h7" stroke="#999" /><circle cx="5.500" cy="8.500" r="4.500" stroke="#4b87b5" /><path d="M3.500 8.500h4M5.500 6.500v4" stroke="#aaa" /><path d="M9 12l3 3" stroke="#a5682e" strokeWidth="2" /></I>} />
        <TB cls="w-[64px]" t="Switch" icon={<I w={17} h={16}><path d="M.5 1h9v7h-9zM0 4.500h9M6.500 8.500h9v7h-9" stroke="#ccc" /><path d="M7 12h9" stroke="#00c2f3" strokeWidth="2.500" /><path d="M11 2h3v4M12 4.500l2 2 2-2M4 14H2v-4M0 11.500l2-2 2 2" stroke="#bbb" /></I>} />
        <TB dim cls="w-[56px]" t="Clear" icon={<RowsIcon a="#777" b="#777" c="#777" />} />
        <TB dim cls="w-[62px]" t="Delete" icon={<I w={16}><path d="M.5 1.500h15v10H.5z" stroke="#888" /><path d="M1 3h14M1 9.500h14" stroke="#888" strokeWidth="2" /><path d="M1 6.500h14" stroke="#2495b5" strokeWidth="3" /><path d="M2 9l7 6M9 9l-7 6" stroke="#d0421f" strokeWidth="2" /></I>} />
        <TB dim cls="w-[60px]" t="Copy" icon={<I w={16}><path d="M4 2h11v9" stroke="#999" /><path d="M4 2.500h11" stroke="#1fa5d0" strokeWidth="3" /><path d="M.5 6.500h11v9H.5z" stroke="#999" fill="#333" /><path d="M1 9h10M1 13h10" stroke="#1fa5d0" strokeWidth="2" /></I>} />
        <div className="ml-auto mr-[9px]"><Burger /></div>
      </div>
      <div className="h-px shrink-0" />
      <Grid />
      <div className="flex flex-1 items-center bg-[#333] pl-px">
        <div className="flex h-[23px] w-[33px] items-center justify-center rounded-[3px] border-2 border-[#1d6fca] bg-[#606060]"><I w={16} h={13}><path d="M0 0h16v13H0z" fill="#222" /><path d="M0 1.500h16" stroke="#aaa" strokeWidth="1" /><path d="M0 6.300h16M0 11h16" stroke="#22bdeb" strokeWidth="2.600" /></I></div>
        <I w={16} h={11} className="mb-[3px] ml-[10px]"><path d="M0 0h16v11H0z" fill="#22bdeb" /><path d="M0 3.500h16M0 7.500h16" stroke="#222" /></I>
        <I w={10} className="ml-[17px]"><path d="M1 0v10" stroke="#707070" strokeWidth="1.500" /><path d="M9 0v10L3 5z" fill="#707070" /></I>
        <I w={10} className="ml-[12px]"><path d="M9 0v10" stroke="#c4c4c4" strokeWidth="1.500" /><path d="M1 0v10l6-5z" fill="#c4c4c4" /></I>
        <span className="ml-[12px] tracking-[-0.3px]">0 of 8 selected</span>
        <span className="ml-auto mr-[4px] tracking-[-0.2px]">Filters:</span>
        <div className="flex size-[21px] items-center justify-center rounded bg-[#3c3c3c]"><I w={15}><circle cx="7.500" cy="7.500" r="6.500" stroke="#4c5d66" fill="#35434a" /><path d="M7.500 3v5h4" stroke="#667" /></I></div>
        <div className="flex size-[21px] items-center justify-center rounded bg-[#3c3c3c]"><I w={15}><circle cx="7.500" cy="8" r="6.500" fill="#34464e" /><path d="M4 5l4 3-2 5zM10 8h3l-2 4z" fill="#3c5a40" /><path d="M4 0v6M8 0v6M12 1v5" stroke="#5c5c5c" /></I></div>
        <I w={17} h={16} className="ml-[4px]"><path d="M0 1h13L8.500 7v8H5.500V7z" fill="#999" /><path d="M7 8h10v8H7z" fill="#333" /><path d="M8 9.500h8M8 12h8M8 14.500h8" stroke="#3c9bdc" strokeWidth="1.700" strokeDasharray="2 1" /></I>
        <Sep className="ml-[2px] h-[15px]" />
        <I w={10} h={15} className="ml-[6px]"><path d="M5 1v7M1 5l4-4 4 4" stroke="#3f8a45" strokeWidth="2" /><path d="M5 7v7M1 10l4 4 4-4" stroke="#a56a2a" strokeWidth="2" /></I>
        <div className="ml-[14px] h-[2px] w-[6px] bg-[#ccc]" />
        <div className="ml-[8px] flex h-3 w-[100px] items-center"><div className="h-[3px] w-[48px] bg-[#808080]" /><div className="h-3 w-[3px] bg-[#909090]" /><div className="h-[3px] flex-1 bg-[#4c4c4c]" /></div>
        <I w={8} className="ml-[7px]"><path d="M0 4h8M4 0v8" stroke="#ccc" strokeWidth="1.500" /></I>
        <div className="ml-[7px] flex h-[27px] w-[60px] items-center justify-between bg-[#212121] px-1 tracking-[-0.4px]">100%<Chev c="#c0c0c0" /></div>
        <Sep className="ml-[5px] mr-[7px] h-[15px]" /><span className="mr-[6px]"><Refresh /></span>
      </div>
    </div>
  </div>
);

/* ---------- catalog pane ---------- */
const Folder = ({ children }: { children?: React.ReactNode }) => <I w={16}><path d="M.5 14V2.500L2 1h4l1.500 1.500H15.500V14z" fill="#cdb32c" /><path d="M2 4h12" stroke="#333" strokeWidth="1.500" />{children}</I>;
const folders: [string, React.ReactNode][] = [
  ["Maps", <><path d="M2.500 5h11v11h-11z" fill="#333" /><path d="M3.500 5.500h9v10h-9z" fill="#4c9a4c" stroke="#bbb" /><path d="M9 8l3-2v9H6l3-4z" fill="#1d5f96" /></>],
  ["Toolboxes", <><path d="M3 8h11v7H3z" fill="#b5341a" /><path d="M6.500 8V6h4v2M3 11h11" stroke="#333" /></>],
  ["Databases", <><path d="M3.500 7v7c0 2 9 2 9 0V7" fill="#555" stroke="#bbb" /><ellipse cx="8" cy="7" rx="4.500" ry="1.500" fill="#333" stroke="#bbb" /></>],
  ["Styles", <><circle cx="8" cy="10" r="5" fill="#555" stroke="#aaa" /><circle cx="6" cy="9" r="1.200" fill="#3c9bdc" /><circle cx="9" cy="8" r="1.200" fill="#4c9a4c" /><path d="M15 6l-7 9" stroke="#ccc" strokeWidth="1.500" /></>],
  ["Folders", <path d="M7 6v9l6-4z" fill="#999" stroke="#333" />],
  ["Locators", <><path d="M2 10l5-4 5 4M3.500 9.500V15h7V9.500" fill="#555" stroke="#d3472a" strokeWidth="1.600" /><path d="M5.500 10.500h3v3h-3z" fill="#3c9bdc" /></>],
];
const Catalog = () => (
  <div className="ml-[5px] flex h-[852px] w-[366px] shrink-0 flex-col">
    <div className="flex h-[832px] shrink-0 flex-col rounded-t-[4px] border border-[#56565c] bg-[#333]">
      <PaneHead t="Catalog" cls="pl-[6px] pr-[6px]" />
      <div className="flex h-[23px] items-start pl-[6px] pr-[8px] pt-[2px] text-[12.5px]">
        <div className="h-[21px] w-[42px] border-b-2 border-[#2790ef] leading-[17px] tracking-[-0.1px]">Project</div>
        <span className="ml-[10px] w-[44px] leading-[17px]">Portal</span><span className="w-[68px] leading-[17px]">Computer</span><span className="leading-[17px]">Favorites</span>
        <span className="ml-auto mt-[4px]"><Burger /></span>
      </div>
      <div className="mt-[8px] flex h-6 items-center pl-[5px] pr-[4px]">
        <I w={18}><circle cx="9" cy="9" r="8" stroke="#5c5c5c" strokeWidth="1.300" /><path d="M14 9H5M8.500 5 4.500 9l4 4" stroke="#6a6a6a" strokeWidth="1.600" /></I>
        <div className="ml-[5px] flex size-6 items-center justify-center border border-[#5c5c5c]"><I w={15}><path d="M1 8l6.500-6L14 8M3 7v6h9V7" stroke="#666" fill="#444" strokeWidth="1.400" /><path d="M5 9h2v4H5z" fill="#865a3a" /><path d="M9 9h2v2H9z" fill="#356c90" /><path d="M0 14h15" stroke="#3a6a3a" strokeWidth="1.500" /></I></div>
        <div className="-ml-px flex size-6 items-center justify-center border border-[#777] bg-[#232323]"><Funnel w={14} /></div>
        <div className="-ml-px flex h-6 flex-1 items-center border border-[#777] bg-[#232323] pl-[5px] pr-[6px] italic text-[#b4b4b4]"><span className="pt-px">Search Project</span><span className="ml-auto"><Mag /></span><Chev className="ml-[12px]" c="#c8c8c8" /></div>
      </div>
      <div className="mt-[7px] flex flex-col">
        {folders.map(([t, g]) => <div key={t} className="flex h-6 items-center pl-[13px]"><I w={6} h={9}><path d="M.5.800v7l4-3.500z" stroke="#888" /></I><span className="ml-[6px]"><Folder>{g}</Folder></span><span className="ml-[9px]">{t}</span></div>)}
      </div>
    </div>
    <div className="flex h-[20px] items-center whitespace-nowrap text-[12px] text-[#d0d0d0]">
      <div className="-mt-px flex h-[20px] w-[72px] items-center gap-[5px] rounded-b-[3px] border border-t-0 border-[#56565c] bg-[#333] pl-[5px] text-[#2b93f0]"><I w={16}><path d="M4 5v9h6M4 9h6" stroke="#bbb" /><path d="M0 0h7v5H0z" fill="#3c9bdc" /><path d="M9 5h7v5H9zM9 11h7v5H9z" fill="#c9b02b" /></I>Catal...</div>
      <div className="ml-[6px] flex w-[70px] items-center gap-[5px]"><I w={16}><path d="M2 1h12l2 13c-5-2-9 1-16 1z" fill="#c0a81f" /><path d="M4 14c1-4 3-4 4-6l5-6 2 2-6 6c-1 2-3 3-5 4z" fill="#555" stroke="#ddd" strokeWidth=".7" /></I>Sym...</div>
      <div className="flex w-[67px] items-center gap-[5px]"><I w={16}><path d="M0 8h14M8.500 2.500 14 8l-5.500 5.500" stroke="#4ca64c" strokeWidth="2.200" /></I>Export</div>
      <div className="flex w-[68px] items-center gap-[5px]"><I w={16}><path d="M.5 3.500h3v12h8M3.500.500h12v11h-12z" stroke="#bbb" /><path d="M6 3v6" stroke="#3c9bdc" strokeWidth="1.500" strokeDasharray="2 1" /><path d="M8 3.500h5M8 6h5M8 8.500h5M2 6v7" stroke="#bbb" /></I>Elem...</div>
      <div className="flex w-[64px] items-center gap-[5px]"><I w={16}><path d="M0 5h16v9H0z" fill="#b5341a" /><path d="M5.500 5V2.500h5V5" stroke="#c8c8c8" /><path d="M0 8.500h16" stroke="#6d1f10" /><path d="M6.500 7.500h3v3h-3z" fill="#ccc" /></I>Geop...</div>
      <I w={9} className="ml-[6px]"><path d="M0 1h9M1 4l3.500 3.500L8 4" stroke="#c8c8c8" strokeWidth="1.400" /></I>
    </div>
  </div>
);

const tabs: [string, string][] = [["Insert", "w-[55px]"], ["Analysis", "w-[68px]"], ["View", "w-[48px]"], ["Edit", "w-[44px]"], ["Imagery", "w-[70px]"], ["Share", "w-[54px]"], ["Help", "w-[59px]"]];

export default function App() {
  return (
    <div className="flex h-[1034px] w-[1917px] flex-col overflow-hidden border-b-2 border-[#241f18] bg-[#3b3b3b] font-['Open_Sans','Noto_Sans',sans-serif] text-[12px] leading-4 tracking-[-0.3px] text-[#dedede]">
      <div className="flex h-[34px] shrink-0 items-center text-[#a8a8a8]">
        <I w={14} h={16} className="ml-[9px]"><path d="M7 0l7 3.500v9L7 16l-7-3.500v-9z" fill="#0b78e0" /><circle cx="7" cy="8" r="4.300" stroke="#fff" strokeWidth="1.500" /><path d="M5 5l4 3-2 3z" fill="#fff" /></I>
        <div className="ml-[12px] h-4 w-px bg-[#666]" />
        <I w={16} className="ml-[19px]"><path d="M0 4h5l1 1h10v10H0z" fill="#2f83c5" /><path d="M2 9l4-2 8 6" fill="#1f5a50" /><circle cx="11" cy="4" r="3.500" fill="#e0b622" /><circle cx="11" cy="4" r="1.300" fill="#3b3b3b" /></I>
        <I w={16} className="ml-[13px]"><path d="M3 6V2.500h4l1 1h6V6M1 14V6h14v8z" stroke="#3c93d2" fill="#3b3b3b" strokeWidth="1.500" /><path d="M1 7h14v7H1z" fill="#2b6d9f" /><path d="M9 10l5-2v6l-4-1z" fill="#3f9150" /></I>
        <I w={16} className="ml-[15px]"><path d="M3 7V4h11v10h-4M5 4V1.500h6V4" stroke="#3c93d2" strokeWidth="1.500" /><path d="M.7 6.700h9v9h-9z" fill="#7a52a0" stroke="#9a72c8" /><path d="M3 12h4.500v3.500H3z" fill="#ddd" /><path d="M3 7h4.500v2.500H3z" fill="#333" /></I>
        <I w={14} h={15} className="ml-[14px]"><path d="M5 1 1 5l4 4M1 5h8c6 0 5 8 1 9" stroke="#666" strokeWidth="1.800" /></I><Chev className="ml-[7px]" c="#aaa" />
        <I w={14} h={15} className="ml-[12px]"><path d="M9 1l4 4-4 4M13 5H5C-1 5 0 13 4 14" stroke="#666" strokeWidth="1.800" /></I><Chev className="ml-[8px]" c="#aaa" />
        <I w={9} className="ml-[18px]"><path d="M1 .700h7M1 4l3.500 3.500L8 4" stroke="#c8c8c8" strokeWidth="1.300" /></I>
        <span className="ml-[32px] w-[68px] pt-[2px]">garage_map</span><Chev c="#aaa" />
        <div className="ml-[547px] flex h-6 w-[180px] items-center rounded-[3px] border border-[#666] bg-[#333] pl-[4px] pr-[5px] italic">
          <I w={16}><path d="M10 3l1.500 4L15 8l-3.500 1L10 13 8.500 9 5 8l3.500-1zM3 1v4M1 3h4M3 11v4M1 13h4" stroke="#888" /></I><span className="ml-[8px] whitespace-nowrap text-[#9c9c9c]">Command Search (Alt+Q)</span><span className="ml-auto"><Mag /></span>
        </div>
        <span className="ml-auto w-[155px] whitespace-nowrap pt-px text-right tracking-[-0.25px]">Adan - Texas A&amp;M University</span>
        <div className="ml-[7px] flex size-6 items-center justify-center rounded-full bg-[#cdf1cd] text-[10px] font-semibold text-[#1f6b35]">AB</div>
        <I w={16} className="ml-[16px]"><path d="M1 13h13M3 13V6c0-3 2-4 4.500-4S12 3 12 6v7M6 15h3" stroke="#b0b0b0" strokeWidth="1.200" /><circle cx="10.500" cy="4.500" r="5" fill="#1f8ef5" /></I>
        <span className="ml-[26px] text-[15px]">?</span>
        <div className="ml-[36px] h-px w-[10px] bg-[#b5b5b5]" />
        <I w={11} className="ml-[34px]"><path d="M.5 2.500h8v8h-8zM2.500 2.500v-2h8v8h-2" stroke="#b5b5b5" /></I>
        <div className="ml-[33px] mr-[13px]"><Close c="#b5b5b5" /></div>
      </div>
      <div className="flex h-8 shrink-0 items-start pl-[18px] pt-[2px] text-[12.5px] text-[#ececec]">
        <span className="w-[52px] leading-[28px]">Project</span>
        <div className="mr-[13px] h-[25px] w-[45px] border-b-2 border-[#2790ef] text-center font-semibold leading-[28px] text-[#2b93f0]">Map</div>
        {tabs.map(([t, w]) => <span key={t} className={w + " leading-[28px]"}>{t}</span>)}
        <div className="h-[25px] w-[51px] rounded-[5px] border border-[#5a5a5a] bg-[#2b2b2b] text-center leading-[26px]">Table</div>
      </div>
      <Ribbon />
      <div className="mt-[6px] flex"><Contents /><Center /><Catalog /></div>
    </div>
  );
}
